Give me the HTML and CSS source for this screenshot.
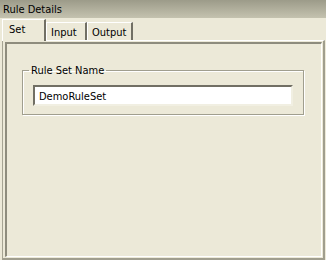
FILE: index.html
```html
<!DOCTYPE html>
<html lang="en">
<head>
    <meta charset="UTF-8">
    <meta name="viewport" content="width=device-width, initial-scale=1.0">
    <title>Rule Details</title>
    <link rel="stylesheet" href="styles.css">
</head>
<body>
    <div class="window">
        <div class="title-bar">Rule Details</div>
        <div class="tabs">
            <div class="tab tab-set active">Set</div>
            <div class="tab tab-input">Input</div>
            <div class="tab tab-output">Output</div>
        </div>
        <div class="page">
            <div class="frame">
                <fieldset class="group">
                    <legend>Rule Set Name</legend>
                    <input type="text" class="name-input" value="DemoRuleSet">
                </fieldset>
            </div>
        </div>
    </div>
</body>
</html>
```

FILE: styles.css
```css
body {
    margin: 0;
    padding: 0;
    font-family: "DejaVu Sans Condensed", "Liberation Sans", sans-serif;
    font-size: 11px;
    color: #000;
    background-color: #ece9d8;
}

.window {
    width: 326px;
    height: 260px;
    background-color: #ece9d8;
    overflow: hidden;
}

.title-bar {
    height: 18px;
    line-height: 20px;
    padding-left: 3px;
    background: linear-gradient(to bottom, #9c9b89, #c4c2af);
}

.tabs {
    display: flex;
    align-items: flex-end;
    height: 22px;
    padding-left: 2px;
    position: relative;
    z-index: 1;
}

.tab {
    box-sizing: border-box;
    height: 18px;
    line-height: 19px;
    padding-left: 4px;
    border-top: 1px solid #fff;
    border-left: 1px solid #fff;
    border-right: 2px solid #716f64;
    background-color: #ece9d8;
}

.tab.active {
    height: 22px;
    line-height: 19px;
    padding-left: 6px;
    margin-bottom: -1px;
}

.tab-set {
    width: 44px;
}

.tab-input {
    width: 41px;
}

.tab-output {
    width: 46px;
}

.page {
    box-sizing: border-box;
    width: 323px;
    height: 220px;
    margin-left: 2px;
    padding: 1px 1px 1px 2px;
    border-top: 1px solid #fff;
    border-left: 1px solid #a6a493;
    border-right: 2px solid #a09e8e;
    border-bottom: 2px solid #a09e8e;
}

.frame {
    box-sizing: border-box;
    height: 215px;
    padding: 20px 0 0 15px;
    border-top: 2px solid #8e8c7d;
    border-left: 2px solid #8e8c7d;
    border-right: 1px solid #fff;
    border-bottom: 1px solid #fff;
}

.group {
    box-sizing: border-box;
    width: 281px;
    margin: 0;
    padding: 8px 10px 8px 10px;
    border: 1px solid #a09e8e;
    box-shadow: 1px 1px 0 #fff, inset 1px 1px 0 #fff;
}

.group legend {
    padding: 0 2px;
    margin-left: -4px;
    line-height: 13px;
}

.name-input {
    box-sizing: border-box;
    display: block;
    width: 260px;
    height: 21px;
    margin: 0;
    padding: 1px 0 0 4px;
    font-family: "DejaVu Sans Condensed", "Liberation Sans", sans-serif;
    font-size: 11px;
    color: #000;
    background-color: #fff;
    border-top: 2px solid #716f64;
    border-left: 2px solid #716f64;
    border-right: 2px solid #f1efe2;
    border-bottom: 2px solid #f1efe2;
    outline: none;
}
```
